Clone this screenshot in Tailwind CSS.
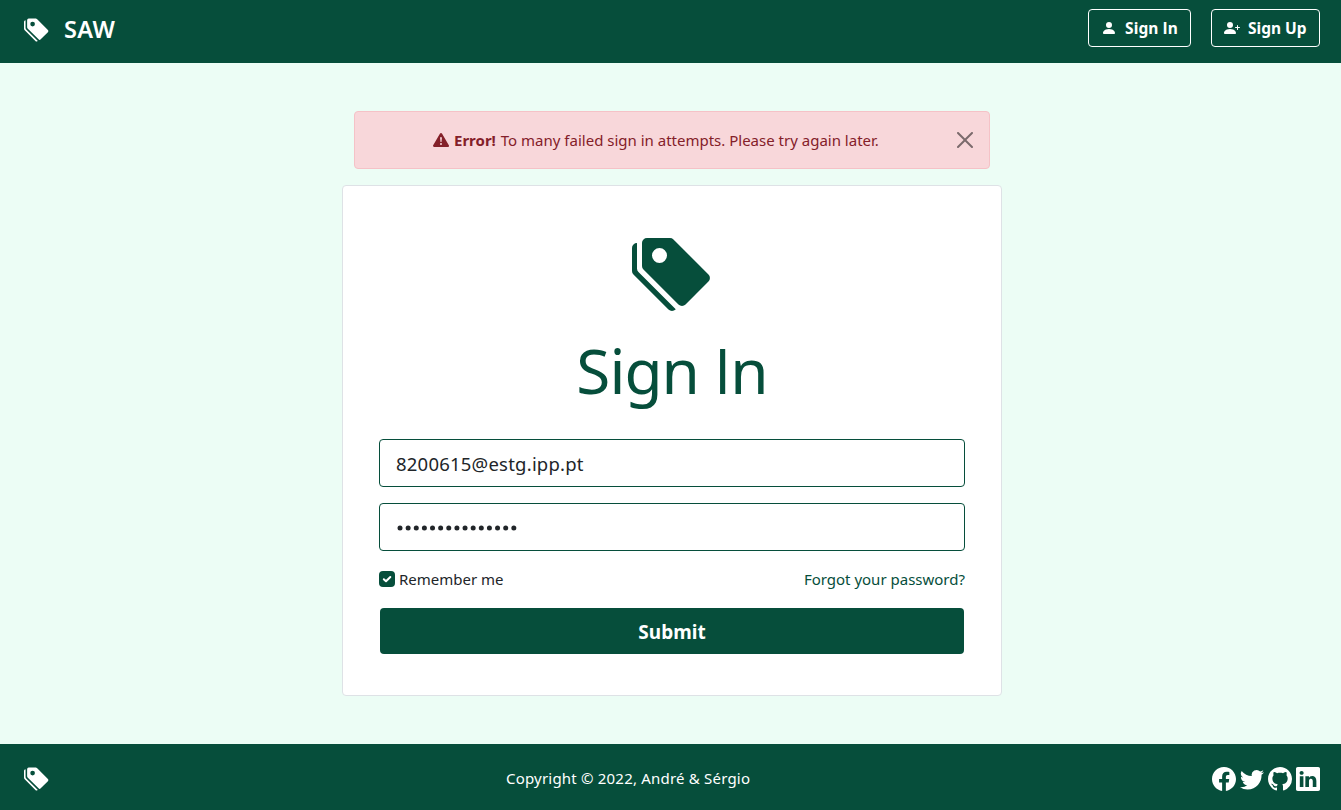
<!DOCTYPE html>
<html lang="en">
<head>
<meta charset="utf-8">
<title>SAW - Sign In</title>
<script src="https://cdn.jsdelivr.net/npm/@tailwindcss/browser@4"></script>
</head>
<body class="flex h-[810px] flex-col overflow-hidden bg-[#ecfdf5] font-['Noto_Sans','Open_Sans',sans-serif] text-[15px] leading-6 text-[#212529]">
<svg class="hidden">
  <symbol id="tags" viewBox="0 0 16 16"><path d="M2 2a1 1 0 0 1 1-1h4.586a1 1 0 0 1 .707.293l7 7a1 1 0 0 1 0 1.414l-4.586 4.586a1 1 0 0 1-1.414 0l-7-7A1 1 0 0 1 2 6.586V2zm3.5 4a1.5 1.5 0 1 0 0-3 1.5 1.5 0 0 0 0 3z"/><path d="M1.293 7.793A1 1 0 0 1 1 7.086V2a1 1 0 0 0-1 1v4.586a1 1 0 0 0 .293.707l7 7a1 1 0 0 0 1.414 0l.043-.043-7.457-7.457z"/></symbol>
</svg>
<header class="flex h-[63px] shrink-0 items-start justify-between bg-[#064e3b] pr-[21px] pl-6 text-white">
  <a class="flex items-center gap-[15px] pt-[14px]">
    <svg class="size-[25px] fill-current"><use href="#tags"/></svg>
    <span class="text-[23.5px] leading-[30px] font-semibold tracking-[0.4px]">SAW</span>
  </a>
  <nav class="flex gap-5 pt-[9px] font-bold">
    <a class="flex h-[38px] w-[103px] items-center rounded border border-white pl-3 whitespace-nowrap">
      <svg class="mr-2 size-4 fill-current" viewBox="0 0 16 16"><path d="M3 14s-1 0-1-1 1-4 6-4 6 3 6 4-1 1-1 1H3zm5-6a3 3 0 1 0 0-6 3 3 0 0 0 0 6z"/></svg>
      <span class="text-[15.5px] tracking-[0.1px]">Sign <span class="font-['Open_Sans']">I</span>n</span>
    </a>
    <a class="flex h-[38px] w-[109px] items-center rounded border border-white pl-3 whitespace-nowrap">
      <svg class="mr-2 size-4 fill-current" viewBox="0 0 16 16"><path d="M1 14s-1 0-1-1 1-4 6-4 6 3 6 4-1 1-1 1H1zm5-6a3 3 0 1 0 0-6 3 3 0 0 0 0 6z"/><path d="M13.5 5a.5.5 0 0 1 .5.5V7h1.5a.5.5 0 0 1 0 1H14v1.5a.5.5 0 0 1-1 0V8h-1.5a.5.5 0 0 1 0-1H13V5.5a.5.5 0 0 1 .5-.5z"/></svg>
      <span class="text-[15.5px]">Sign Up</span>
    </a>
  </nav>
</header>
<main class="flex flex-1 flex-col items-center pt-12 pl-[3px]">
  <div class="flex h-[58px] w-[636px] items-center rounded border border-[#f5c2c7] bg-[#f8d7da] pr-4 pl-[78px] whitespace-nowrap text-[#842029]">
    <svg class="mr-[5px] size-4 fill-current" viewBox="0 0 16 16"><path d="M8.982 1.566a1.13 1.13 0 0 0-1.96 0L.165 13.233c-.457.778.091 1.767.98 1.767h13.713c.889 0 1.438-.99.98-1.767L8.982 1.566zM8 5c.535 0 .954.462.9.995l-.35 3.507a.552.552 0 0 1-1.1 0L7.1 5.995A.905.905 0 0 1 8 5zm.002 6a1 1 0 1 1 0 2 1 1 0 0 1 0-2z"/></svg>
    <strong class="mr-[5px] font-bold">Error!</strong>
    <span>To many failed sign in attempts. Please try again later.</span>
    <button class="ml-auto opacity-50" aria-label="Close"><svg class="size-4 fill-black" viewBox="0 0 16 16"><path d="M.293.293a1 1 0 011.414 0L8 6.586 14.293.293a1 1 0 111.414 1.414L9.414 8l6.293 6.293a1 1 0 01-1.414 1.414L8 9.414l-6.293 6.293a1 1 0 01-1.414-1.414L6.586 8 .293 1.707a1 1 0 010-1.414z"/></svg></button>
  </div>
  <form class="mt-4 flex h-[511px] w-[660px] flex-col rounded border border-[#dee2e6] bg-white px-9 pt-[47px]">
    <svg class="mx-auto size-20 shrink-0 fill-[#064e3b]"><use href="#tags"/></svg>
    <h1 class="mt-[19px] text-center text-[62px] leading-[77px] tracking-[-1px] text-[#064e3b]">Sign <span class="font-['Open_Sans']">I</span>n</h1>
    <div class="mt-[30px] flex h-12 shrink-0 items-center rounded border border-[#064e3b] px-4 pt-0.5 text-[18.5px] tracking-[0.22px]"><span>8200615@estg.ipp.pt</span></div>
    <div class="mt-4 flex h-12 shrink-0 items-center rounded border border-[#064e3b] px-[17px] pt-0.5">
      <svg class="h-[6px] w-[122px] fill-[#212529]" viewBox="0 0 122 6"><circle cx="3" cy="3" r="2.5"/><circle cx="11.13" cy="3" r="2.5"/><circle cx="19.26" cy="3" r="2.5"/><circle cx="27.39" cy="3" r="2.5"/><circle cx="35.52" cy="3" r="2.5"/><circle cx="43.65" cy="3" r="2.5"/><circle cx="51.78" cy="3" r="2.5"/><circle cx="59.91" cy="3" r="2.5"/><circle cx="68.04" cy="3" r="2.5"/><circle cx="76.17" cy="3" r="2.5"/><circle cx="84.3" cy="3" r="2.5"/><circle cx="92.43" cy="3" r="2.5"/><circle cx="100.56" cy="3" r="2.5"/><circle cx="108.69" cy="3" r="2.5"/><circle cx="116.82" cy="3" r="2.5"/></svg>
    </div>
    <div class="mt-4 flex h-6 items-center justify-between">
      <label class="flex items-center gap-1">
        <svg class="size-4 rounded bg-[#064e3b]" viewBox="0 0 16 16"><path d="M4.8 8.2 7 10.3l4.3-4.3" fill="none" stroke="#fff" stroke-width="2" stroke-linecap="round" stroke-linejoin="round"/></svg>
        <span>Remember me</span>
      </label>
      <a class="text-[#064e3b]">Forgot your password?</a>
    </div>
    <button class="mx-px mt-[17px] h-[46px] shrink-0 rounded bg-[#064e3b] pt-0.5 text-[19px] font-bold text-white">Submit</button>
  </form>
</main>
<footer class="grid h-[66px] shrink-0 grid-cols-[482px_1fr_auto] items-center bg-[#064e3b] pt-1 pr-[21px] pl-6 text-white">
  <svg class="mb-px size-[25px] fill-current"><use href="#tags"/></svg>
  <span class="mb-0.5 tracking-[0.2px]">Copyright © 2022, André &amp; Sérgio</span>
  <div class="flex gap-1">
    <svg class="size-6 fill-current" viewBox="0 0 16 16"><path d="M16 8.049c0-4.446-3.582-8.05-8-8.05C3.58 0-.002 3.603-.002 8.05c0 4.017 2.926 7.347 6.75 7.951v-5.625h-2.03V8.05H6.75V6.275c0-2.017 1.195-3.131 3.022-3.131.876 0 1.791.157 1.791.157v1.98h-1.009c-.993 0-1.303.621-1.303 1.258v1.51h2.218l-.354 2.326H9.25V16c3.824-.604 6.75-3.934 6.75-7.951z"/></svg>
    <svg class="size-6 fill-current" viewBox="0 0 16 16"><path d="M5.026 15c6.038 0 9.341-5.003 9.341-9.334 0-.14 0-.282-.006-.422A6.685 6.685 0 0 0 16 3.542a6.658 6.658 0 0 1-1.889.518 3.301 3.301 0 0 0 1.447-1.817 6.533 6.533 0 0 1-2.087.793A3.286 3.286 0 0 0 7.875 6.03a9.325 9.325 0 0 1-6.767-3.429 3.289 3.289 0 0 0 1.018 4.382A3.323 3.323 0 0 1 .64 6.575v.045a3.288 3.288 0 0 0 2.632 3.218 3.203 3.203 0 0 1-.865.115 3.23 3.23 0 0 1-.614-.057 3.283 3.283 0 0 0 3.067 2.277A6.588 6.588 0 0 1 .78 13.58a6.32 6.32 0 0 1-.78-.045A9.344 9.344 0 0 0 5.026 15z"/></svg>
    <svg class="size-6 fill-current" viewBox="0 0 16 16"><path d="M8 0C3.58 0 0 3.58 0 8c0 3.54 2.29 6.53 5.47 7.59.4.07.55-.17.55-.38 0-.19-.01-.82-.01-1.49-2.01.37-2.53-.49-2.69-.94-.09-.23-.48-.94-.82-1.13-.28-.15-.68-.52-.01-.53.63-.01 1.08.58 1.23.82.72 1.21 1.87.87 2.33.66.07-.52.28-.87.51-1.07-1.78-.2-3.64-.89-3.64-3.95 0-.87.31-1.59.82-2.15-.08-.2-.36-1.02.08-2.12 0 0 .67-.21 2.2.82.64-.18 1.32-.27 2-.27.68 0 1.36.09 2 .27 1.53-1.04 2.2-.82 2.2-.82.44 1.1.16 1.92.08 2.12.51.56.82 1.27.82 2.15 0 3.07-1.87 3.75-3.65 3.95.29.25.54.73.54 1.48 0 1.07-.01 1.93-.01 2.2 0 .21.15.46.55.38A8.012 8.012 0 0 0 16 8c0-4.42-3.58-8-8-8z"/></svg>
    <svg class="size-6 fill-current" viewBox="0 0 16 16"><path d="M0 1.146C0 .513.526 0 1.175 0h13.65C15.474 0 16 .513 16 1.146v13.708c0 .633-.526 1.146-1.175 1.146H1.175C.526 16 0 15.487 0 14.854V1.146zm4.943 12.248V6.169H2.542v7.225h2.401zm-1.2-8.212c.837 0 1.358-.554 1.358-1.248-.015-.709-.52-1.248-1.342-1.248-.822 0-1.359.54-1.359 1.248 0 .694.521 1.248 1.327 1.248h.016zm4.908 8.212V9.359c0-.216.016-.432.08-.586.173-.431.568-.878 1.232-.878.869 0 1.216.662 1.216 1.634v3.865h2.401V9.25c0-2.22-1.184-3.252-2.764-3.252-1.274 0-1.845.7-2.165 1.193v.025h-.016a5.54 5.54 0 0 1 .016-.025V6.169h-2.4c.03.678 0 7.225 0 7.225h2.4z"/></svg>
  </div>
</footer>
</body>
</html>
